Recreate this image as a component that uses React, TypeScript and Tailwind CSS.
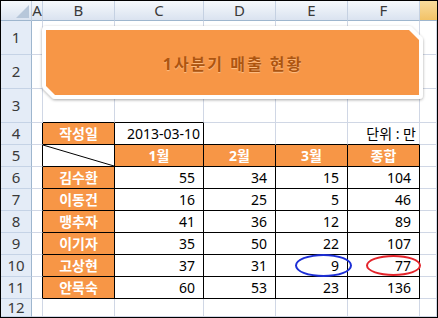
const FONT = "font-['Noto_Sans','Noto_Sans_CJK_KR',sans-serif]";

const colLetters = ["", "A", "B", "C", "D", "E", "F", ""];

const people = [
  { name: "김수환", v: [55, 34, 15, 104] },
  { name: "이동건", v: [16, 25, 5, 46] },
  { name: "맹추자", v: [41, 36, 12, 89] },
  { name: "이기자", v: [35, 50, 22, 107] },
  { name: "고상현", v: [37, 31, 9, 77] },
  { name: "안묵숙", v: [60, 53, 23, 136] },
];

// row 4 + rows 5..11 for cols B..F are the bordered table
const inTable = (r: number, c: number) =>
  (r === 4 && (c === 2 || c === 3)) || (r >= 5 && r <= 11 && c >= 2 && c <= 6);

type Cell = { text?: string; kind?: "head" | "num" | "date" | "unit" | "diag" };

function cellAt(r: number, c: number): Cell {
  if (r === 4) {
    if (c === 2) return { text: "작성일", kind: "head" };
    if (c === 3) return { text: "2013-03-10", kind: "date" };
    if (c === 6) return { text: "단위 : 만", kind: "unit" };
  }
  if (r === 5) {
    if (c === 2) return { kind: "diag" };
    const h = ["1월", "2월", "3월", "종합"][c - 3];
    if (h) return { text: h, kind: "head" };
  }
  if (r >= 6 && r <= 11) {
    const p = people[r - 6];
    if (c === 2) return { text: p.name, kind: "head" };
    if (c >= 3 && c <= 6) return { text: String(p.v[c - 3]), kind: "num" };
  }
  return {};
}

function Corner() {
  return (
    <div className="relative border-r border-b border-r-[#c5d1e2] border-b-[#9eb6ce] bg-gradient-to-b from-[#f6f9fc] to-[#dae3f0]">
      <svg className="absolute left-[15px] top-[4px]" width="13" height="13" viewBox="0 0 13 13">
        <polygon points="13,0 13,13 0,13" fill="#b7c7da" />
      </svg>
    </div>
  );
}

function ColHead({ c }: { c: number }) {
  if (c === 7) {
    return <div className="border-b border-b-[#9eb6ce] bg-gradient-to-b from-[#f9dc9c] to-[#f2c266]" />;
  }
  return (
    <div className="flex items-center justify-center overflow-visible border-r border-b border-r-[#c5d1e2] border-b-[#9eb6ce] bg-gradient-to-b from-[#f6f9fc] to-[#dae3f0] text-[15px] leading-none text-[#3a3a3a]">
      {colLetters[c]}
    </div>
  );
}

function DataCell({ r, c }: { r: number; c: number }) {
  const cell = cellAt(r, c);
  const right = inTable(r, c) || inTable(r, c + 1) ? "border-r-black" : "border-r-[#d0d7e5]";
  const bottom = inTable(r, c) || inTable(r + 1, c) ? "border-b-black" : "border-b-[#d0d7e5]";
  const base = `relative flex items-center border-r border-b ${right} ${bottom} text-[14px] leading-none`;

  if (cell.kind === "head") {
    return (
      <div className={`${base} justify-center bg-[#f79646] font-bold text-white`}>{cell.text}</div>
    );
  }
  if (cell.kind === "diag") {
    return (
      <div className={`${base} bg-white`}>
        <svg className="absolute inset-0 h-full w-full" viewBox="0 0 100 100" preserveAspectRatio="none">
          <line x1="0" y1="0" x2="100" y2="100" stroke="black" strokeWidth="1" vectorEffect="non-scaling-stroke" />
        </svg>
      </div>
    );
  }
  if (cell.kind === "num") {
    return <div className={`${base} justify-end bg-white pr-[8px] text-black`}>{cell.text}</div>;
  }
  if (cell.kind === "date" || cell.kind === "unit") {
    return (
      <div className={`${base} justify-end whitespace-pre bg-white pr-[3px] text-black`}>{cell.text}</div>
    );
  }
  return <div className={`${base} bg-white`} />;
}

function Banner() {
  return (
    <div className="absolute left-[35px] top-[19px] h-[86px] w-[394px]">
      <svg className="absolute inset-0" width="394" height="86" viewBox="0 0 394 86">
        <defs>
          <filter id="sh" x="-5%" y="-20%" width="110%" height="140%">
            <feDropShadow dx="0" dy="1" stdDeviation="1.6" floodColor="#000" floodOpacity="0.35" />
          </filter>
        </defs>
        <polygon
          points="10,10 373,10 383,20 383,75 19,75 10,66"
          fill="#fff"
          stroke="#fff"
          strokeWidth="8"
          strokeLinejoin="round"
          filter="url(#sh)"
        />
        <polygon points="10,10 373,10 383,20 383,75 19,75 10,66" fill="#f79646" />
      </svg>
      <div className="absolute inset-0 flex items-center justify-center">
        <span className="pt-[1px] text-[16px] font-bold tracking-[2px] text-[#ad5510] [text-shadow:0_1px_1px_#fdc28a]">
          1사분기 매출 현황
        </span>
      </div>
    </div>
  );
}

export default function App() {
  const rows = Array.from({ length: 13 }, (_, i) => i);
  return (
    <div className={`relative h-[318px] w-[438px] overflow-hidden border border-black bg-white ${FONT}`}>
      <div className="grid h-full w-full grid-cols-[31px_11px_72px_89px_72px_72px_72px_1fr] grid-rows-[20px_34px_34px_34px_repeat(8,22px)_1fr]">
        {rows.map((r) =>
          Array.from({ length: 8 }, (_, c) => {
            if (r === 0) return c === 0 ? <Corner key={c} /> : <ColHead key={c} c={c} />;
            if (c === 0)
              return (
                <div
                  key={`${r}-${c}`}
                  className="flex items-center justify-center border-r border-b border-r-[#9eb6ce] border-b-[#c5d3e6] bg-[#e4ecf7] text-[15px] leading-none text-[#3a3a3a]"
                >
                  {r}
                </div>
              );
            return <DataCell key={`${r}-${c}`} r={r} c={c} />;
          })
        )}
      </div>

      <Banner />

      <div className="pointer-events-none absolute left-[294px] top-[253px] h-[23px] w-[57px] rounded-[50%] border-2 border-[#1d2fd6]" />
      <div className="pointer-events-none absolute left-[365px] top-[254px] h-[21px] w-[55px] rounded-[50%] border-2 border-[#e3242b]" />
    </div>
  );
}
